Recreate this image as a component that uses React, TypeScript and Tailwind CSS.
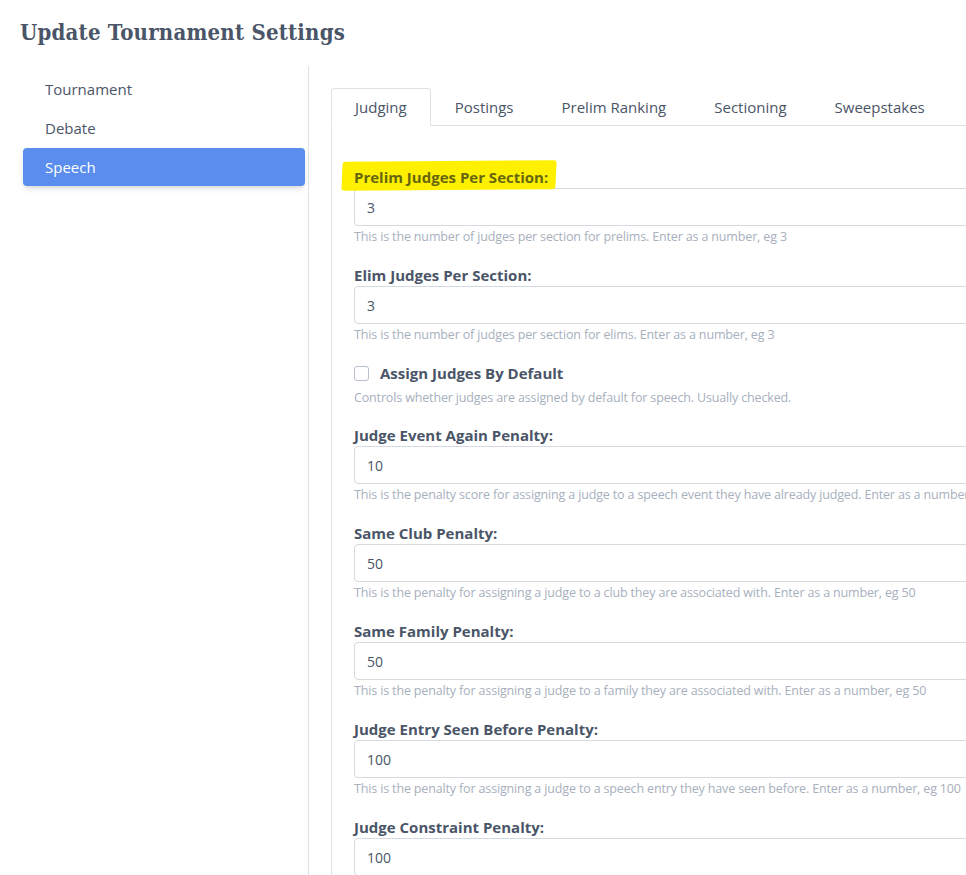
import { useState } from 'react';

const tabs = ['Judging', 'Postings', 'Prelim Ranking', 'Sectioning', 'Sweepstakes'];
const sections = ['Tournament', 'Debate', 'Speech'];

type Field = {
  label: string;
  value: string;
  help: string;
  highlight?: boolean;
};

const before: Field[] = [
  {
    label: 'Prelim Judges Per Section:',
    value: '3',
    help: 'This is the number of judges per section for prelims. Enter as a number, eg 3',
    highlight: true,
  },
  {
    label: 'Elim Judges Per Section:',
    value: '3',
    help: 'This is the number of judges per section for elims. Enter as a number, eg 3',
  },
];

const after: Field[] = [
  {
    label: 'Judge Event Again Penalty:',
    value: '10',
    help: 'This is the penalty score for assigning a judge to a speech event they have already judged. Enter as a number, eg 10',
  },
  {
    label: 'Same Club Penalty:',
    value: '50',
    help: 'This is the penalty for assigning a judge to a club they are associated with. Enter as a number, eg 50',
  },
  {
    label: 'Same Family Penalty:',
    value: '50',
    help: 'This is the penalty for assigning a judge to a family they are associated with. Enter as a number, eg 50',
  },
  {
    label: 'Judge Entry Seen Before Penalty:',
    value: '100',
    help: 'This is the penalty for assigning a judge to a speech entry they have seen before. Enter as a number, eg 100',
  },
  {
    label: 'Judge Constraint Penalty:',
    value: '100',
    help: 'This is the penalty for assigning a judge against a constraint. Enter as a number, eg 100',
  },
];

function FieldGroup({ field }: { field: Field }) {
  return (
    <div className="mb-[18px]">
      <label className="block h-5 mb-px leading-5 text-[15px] font-bold text-[#4a5568]">
        {field.highlight ? (
          <span className="relative inline-block">
            <span className="absolute -left-3 -right-2 -top-[6px] -bottom-[3px] bg-[#fff000] rounded-[3px] -skew-x-3 -rotate-[0.4deg]" />
            <span className="relative text-[#66660f]">{field.label}</span>
          </span>
        ) : (
          field.label
        )}
      </label>
      <input
        defaultValue={field.value}
        className="block w-full h-[38px] px-3 border border-[#d5dae1] rounded bg-white text-[14px] text-[#4a5568] outline-none"
      />
      <p className="mt-px h-5 leading-5 text-[12.5px] tracking-[-0.15px] text-[#a7b0bd] whitespace-nowrap">
        {field.help}
      </p>
    </div>
  );
}

export default function App() {
  const [active, setActive] = useState('Speech');
  const [tab, setTab] = useState('Judging');
  const [assign, setAssign] = useState(false);

  return (
    <div className="w-screen h-screen overflow-hidden bg-white font-['Open_Sans',sans-serif]">
      <div className="w-[1250px]">
        <h1 className="pl-5 pt-[18px] h-[66px] font-['DejaVu_Serif_Condensed','DejaVu_Serif',serif] font-bold text-[22px] tracking-[0.2px] leading-7 text-[#4a5568]">
          Update Tournament Settings
        </h1>

        <div className="flex">
          <nav className="w-[308px] shrink-0 pt-1 pl-[23px] pr-[3px] flex flex-col gap-px">
            {sections.map((s) => (
              <button
                key={s}
                onClick={() => setActive(s)}
                className={
                  s === active
                    ? 'h-[38px] pl-[22px] text-left text-[15px] rounded bg-[#5a8dee] text-white shadow-md'
                    : 'h-[38px] pl-[22px] text-left text-[15px] rounded text-[#4a5568]'
                }
              >
                {s}
              </button>
            ))}
          </nav>

          <div className="w-px bg-[#dde1e6] min-h-[809px]" />

          <main className="flex-1 pl-[22px] pt-[22px]">
            <div className="flex h-[38px] border-b border-[#dee2e6]">
              {tabs.map((t) => (
                <button
                  key={t}
                  onClick={() => setTab(t)}
                  className={
                    t === tab
                      ? 'px-[23px] pt-px -mb-px bg-white border border-[#dee2e6] border-b-white rounded-t text-[15px] text-[#4a5568]'
                      : 'px-[23px] pt-px -mb-px border border-transparent text-[15px] text-[#4a5568]'
                  }
                >
                  {t}
                </button>
              ))}
            </div>

            <div className="border-l border-[#dee2e6] pl-[22px] pt-[41px]">
              {before.map((f) => (
                <FieldGroup key={f.label} field={f} />
              ))}

              <div className="mb-[17px]">
                <label className="flex items-center gap-[11px] h-5 leading-5 text-[15px] font-bold text-[#4a5568]">
                  <input
                    type="checkbox"
                    checked={assign}
                    onChange={(e) => setAssign(e.target.checked)}
                    className="appearance-none w-[15px] h-[15px] border border-[#b8c0cc] rounded-[3px] bg-white checked:bg-[#5a8dee]"
                  />
                  Assign Judges By Default
                </label>
                <p className="mt-[5px] h-5 leading-5 text-[12.5px] tracking-[-0.15px] text-[#a7b0bd]">
                  Controls whether judges are assigned by default for speech. Usually checked.
                </p>
              </div>

              {after.map((f) => (
                <FieldGroup key={f.label} field={f} />
              ))}
            </div>
          </main>
        </div>
      </div>
    </div>
  );
}
